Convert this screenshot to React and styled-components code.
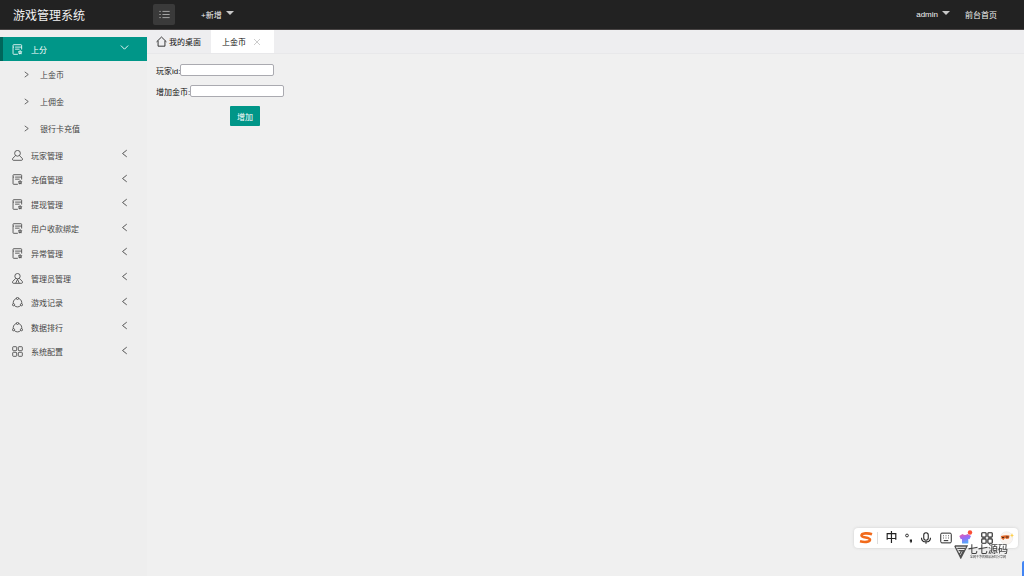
import React, { useState } from 'react';
import styled, { createGlobalStyle } from "styled-components"

const icons = {
    list: <><path d="M5 3.500h10.500M5 8h10.500M5 12.500h10.500"/><path d="M.5 3.500h2M.5 8h2M.5 12.500h2"/></>,
    form: <><path d="M8.500 15H2.500Q1.500 15 1.500 14V2Q1.500 1 2.500 1H13Q14 1 14 2V8M1.500 4.500H3M4.500 4.500H14M4.500 7.500H11"/><path d="M11.800 9.500l.8 1.600 1.800.3-1.300 1.300.3 1.800-1.600-.8-1.600.8.3-1.800-1.300-1.300 1.800-.3z" fill="currentColor" fillOpacity=".4"/></>,
    user: <><circle cx="8" cy="4.800" r="4.200"/><path d="M5.200 8.200L1 12.200Q.3 15 1.800 15H14.200Q15.700 15 15 12.200L10.800 8.200"/></>,
    admin: <><circle cx="8" cy="4.600" r="3.900"/><path d="M5.500 7.800L1 12.200Q.3 15 1.800 15H14.200Q15.700 15 15 12.200L10.500 7.800M8 9L5.500 14.800M8 9L10.500 14.800"/></>,
    record: <><circle cx="8" cy="8.200" r="6.200"/><g fill="#eee"><circle cx="8" cy="2" r="1.600"/><circle cx="2.200" cy="11.200" r="1.600"/><circle cx="13.800" cy="11.200" r="1.600"/></g></>,
    grid: <><rect x="1" y="1" width="5.800" height="5.800" rx="1"/><rect x="9.200" y="1" width="5.800" height="5.800" rx="1"/><rect x="1" y="9.200" width="5.800" height="5.800" rx="1"/><rect x="9.200" y="9.200" width="5.800" height="5.800" rx="1"/></>,
    home: <path d="M.8 8.500L8 1.500L15.200 8.500M3 7V14.800H13V7"/>,
    left: <path d="M12 2L4.500 8L12 14"/>,
    right: <path d="M4 2L12 8L4 14"/>,
    down: <path d="M1.500 4.500L8 11L14.500 4.500"/>,
    close: <path d="M2 2L14 14M14 2L2 14"/>,
    mic: <><rect x="5" y="1" width="6" height="10" rx="3"/><path d="M2 7.500C2 15 14 15 14 7.500M8 13V15.800"/></>,
    keyboard: <><rect x="1" y="1.500" width="14" height="13" rx="1.500"/><path d="M4 5h1M7.500 5h1M11 5h1M4 8h1M7.500 8h1M11 8h1M5 11.500h6"/></>,
};

const Icon = ({ name, size = 11, stroke = 1.2 }) => (
    <Svg viewBox="0 0 16 16" width={size} height={size} strokeWidth={stroke} aria-hidden="true">{icons[name]}</Svg>
)

const subMenu = ["上金币", "上佣金", "银行卡充值"];

const menu = [
    { icon: "user", label: "玩家管理" },
    { icon: "form", label: "充值管理" },
    { icon: "form", label: "提现管理" },
    { icon: "form", label: "用户收款绑定" },
    { icon: "form", label: "异常管理" },
    { icon: "admin", label: "管理员管理" },
    { icon: "record", label: "游戏记录" },
    { icon: "record", label: "数据排行" },
    { icon: "grid", label: "系统配置" },
];

const App = () => {
    const [playerId, setPlayerId] = useState("")
    const [coins, setCoins] = useState("")

    return (
        <Page>
            <GlobalStyle/>
            <Header>
                <Title href="#">游戏管理系统</Title>
                <Toggle type="button" aria-label="菜单"><Icon name="list"/></Toggle>
                <AddButton type="button">+新增<Caret/></AddButton>
                <Account>
                    <HeaderButton type="button">admin<Caret/></HeaderButton>
                    <a href="#">前台首页</a>
                </Account>
            </Header>
            <Body>
                <Sidebar>
                    <OpenItem href="#">
                        <Icon name="form"/>
                        <Label>上分</Label>
                        <Arrow><Icon name="down" size={9} stroke={1.6}/></Arrow>
                    </OpenItem>
                    {subMenu.map((label) => (
                        <SubItem href="#" key={label}><Icon name="right" size={7} stroke={1.8}/>{label}</SubItem>
                    ))}
                    <MenuList>
                        {menu.map(({ icon, label }) => (
                            <MenuItem href="#" key={label}>
                                <Icon name={icon}/>
                                <Label>{label}</Label>
                                <Arrow><Icon name="left" size={9} stroke={1.6}/></Arrow>
                            </MenuItem>
                        ))}
                    </MenuList>
                </Sidebar>
                <Main>
                    <Tabs>
                        <Tab type="button"><Icon name="home"/>我的桌面</Tab>
                        <Tab type="button" $active>上金币<Close><Icon name="close" size={8}/></Close></Tab>
                    </Tabs>
                    <Form onSubmit={(ev) => ev.preventDefault()}>
                        <Field>
                            <label htmlFor="player">玩家id:</label>
                            <Input id="player" type="text" value={playerId} onChange={(ev) => setPlayerId(ev.target.value)}/>
                        </Field>
                        <Field>
                            <label htmlFor="coins">增加金币:</label>
                            <Input id="coins" type="text" value={coins} onChange={(ev) => setCoins(ev.target.value)}/>
                        </Field>
                        <Submit type="submit">增加</Submit>
                    </Form>
                </Main>
            </Body>

            <ImeBar>
                <ImeLogo>
                    <svg width="14" height="12" viewBox="0 0 14 12" aria-hidden="true">
                        <path d="M13 2.200C9 .8 2.500 1 2.500 3.600C2.500 6 11 5.200 11 7.800C11 10.300 5 10.300 1 9.300" fill="none" stroke="#f26a1b" strokeWidth="2.600"/>
                    </svg>
                </ImeLogo>
                <Lang>中</Lang>
                <svg width="8" height="12" viewBox="0 0 8 12" aria-hidden="true">
                    <circle cx="2" cy="3.500" r="1.400" fill="none" stroke="#222" strokeWidth=".9"/>
                    <path d="M4.800 7.500h2.200v2q-.3 1.500-2 1.800q.8-.8.800-1.600h-1z" fill="#222"/>
                </svg>
                <Icon name="mic" size={12} stroke={1.4}/>
                <Icon name="keyboard" size={12} stroke={1.3}/>
                <svg width="14" height="16" viewBox="0 0 14 16" aria-hidden="true">
                    <defs>
                        <linearGradient id="shirt" x1="0" y1="0" x2=".4" y2="1">
                            <stop offset="0" stopColor="#f45c9c"/>
                            <stop offset=".5" stopColor="#9a6af5"/>
                            <stop offset="1" stopColor="#55a8fa"/>
                        </linearGradient>
                    </defs>
                    <path d="M3.500 4Q6 6 8.500 4L12 6L10.500 9.200L9.300 9V13Q9.300 13.500 8.800 13.500H3.500Q3 13.500 3 13V9L1.800 9.200L.3 6Z" fill="url(#shirt)"/>
                    <circle cx="11" cy="2.500" r="2.200" fill="#fa4d35"/>
                </svg>
                <Icon name="grid" size={12} stroke={1.5}/>
                <svg width="14" height="14" viewBox="0 0 14 14" aria-hidden="true">
                    <circle cx="6.500" cy="7" r="6.300" fill="#faf4ef" stroke="#e5e5e5" strokeWidth=".5"/>
                    <path d="M1 5Q5 4 9.500 4.500L9 7.500L6.500 8L5 7L3.500 9L1.500 7.800Z" fill="#dd6425"/>
                    <path d="M2 6h2v1H2zM6 5.500h2.500v1H6z" fill="#44291c"/>
                    <path d="M12 2l.6 1.800 1.400.6-1.400.6-.6 1.800-.6-1.800-1.400-.6 1.400-.6z" fill="#ffd14a"/>
                </svg>
            </ImeBar>
            <Watermark>
                <svg width="14" height="14" viewBox="0 0 14 14" fill="none" stroke="#505050" strokeWidth="1.300" aria-hidden="true">
                    <path d="M.8 1H13L6.800 13L.8 1M3.300 3.400H11M4.600 5.700H9.500L6.500 11.500M7.500 5.700L5.500 9.500"/>
                </svg>
                <WatermarkText>
                    <Brand>七七源码</Brand>
                    <Slogan>全网干净的精品源码分享网</Slogan>
                </WatermarkText>
            </Watermark>
            <Edge/>
        </Page>
    )
}

const GlobalStyle = createGlobalStyle`
    * {
        box-sizing: border-box;
    }
    body {
        margin: 0;
        background-color: #f0f0f0;
        color: #111;
        font-family: "Liberation Sans", "Noto Sans CJK SC", sans-serif;
        font-size: 8px;
    }
    a {
        color: inherit;
        text-decoration: none;
    }
    button, input {
        font: inherit;
        color: inherit;
    }
    button {
        border: none;
        padding: 0;
        background-color: transparent;
        cursor: pointer;
    }
`

const Svg = styled.svg`
    flex: none;
    display: block;
    fill: none;
    stroke: currentColor;
`

const Page = styled.div`
    min-height: 100vh;
    display: flex;
    flex-direction: column;
`

const Header = styled.header`
    height: 30px;
    display: flex;
    align-items: center;
    background-color: #222;
    border-bottom: 1px solid #484444;
    color: #f2f2f2;
`

const Title = styled.a`
    width: 153px;
    padding-left: 13px;
    font-size: 12px;
`

const Toggle = styled.button`
    width: 22px;
    height: 21px;
    display: grid;
    place-items: center;
    border-radius: 2px;
    background-color: #3a3a3a;
    color: #bbb;
`

const HeaderButton = styled.button`
    display: flex;
    align-items: center;
    gap: 4px;
`

const AddButton = styled(HeaderButton)`
    margin-left: 26px;
`

const Caret = styled.span`
    margin-bottom: 4px;
    border: 4px solid transparent;
    border-top-color: #c8c8c8;
    border-bottom: none;
`

const Account = styled.div`
    margin-left: auto;
    padding-right: 27px;
    display: flex;
    align-items: center;
    gap: 15px;
`

const Body = styled.div`
    flex: 1;
    display: flex;
`

const Sidebar = styled.nav`
    width: 147px;
    flex: none;
    padding-top: 7px;
    background-color: #eee;
    color: #444;
`

const MenuItem = styled.a`
    display: flex;
    align-items: center;
    gap: 8px;
    padding: 0 18px 0 12px;
`

const OpenItem = styled(MenuItem)`
    height: 24px;
    padding-left: 9px;
    border-left: 3px solid #00665b;
    background-color: #009688;
    color: #fff;
`

const Label = styled.span`
    flex: 1;
`

const Arrow = styled.span`
    padding-bottom: 3px;
`

const SubItem = styled.a`
    height: 27px;
    display: flex;
    align-items: center;
    gap: 10px;
    padding-left: 23px;
`

const MenuList = styled.div`
    height: 221px;
    margin-top: 1px;
    display: grid;
    grid-auto-rows: 1fr;
`

const Main = styled.main`
    flex: 1;
    min-width: 0;
`

const Tabs = styled.div`
    height: 24px;
    padding-left: 1px;
    display: flex;
    background-color: #eeeef0;
    border-bottom: 1px solid #e8e8ea;
`

const Tab = styled.button`
    height: 23px;
    display: flex;
    align-items: center;
    gap: 2px;
    padding: 0 10px 0 ${props => props.$active ? "11px" : "8px"};
    background-color: ${props => props.$active ? "#fff" : "transparent"};
`

const Close = styled.span`
    padding: 0 3px 0 5px;
    color: #aaa;
`

const Form = styled.form`
    display: flex;
    flex-direction: column;
    align-items: flex-start;
    gap: 9px;
    padding: 10px 9px;
`

const Field = styled.div`
    height: 12px;
    display: flex;
    align-items: center;
`

const Input = styled.input`
    width: 94px;
    height: 12px;
    padding: 1px;
    border: 1px solid #aaaab0;
    border-radius: 2px;
    background-color: #fff;
`

const Submit = styled.button`
    width: 30px;
    height: 20px;
    margin-left: 74px;
    border-radius: 1px;
    background-color: #009688;
    color: #fff;
`

const ImeBar = styled.aside`
    position: fixed;
    right: 6px;
    bottom: 28px;
    width: 164px;
    height: 20px;
    padding: 0 4px 0 5px;
    display: flex;
    align-items: center;
    justify-content: space-between;
    border-radius: 4px;
    background-color: #fff;
    box-shadow: 0 0 3px #ccc;
    color: #222;
`

const ImeLogo = styled.span`
    display: flex;
    padding-right: 4px;
    border-right: 1px solid #ddd;
`

const Lang = styled.span`
    font-size: 12px;
    line-height: 14px;
    font-weight: 500;
`

const Watermark = styled.div`
    position: fixed;
    right: 16px;
    bottom: 17px;
    display: flex;
    align-items: center;
    color: #444;
`

const WatermarkText = styled.div`
    display: flex;
    flex-direction: column;
    align-items: center;
`

const Brand = styled.span`
    font-size: 10px;
    line-height: 10px;
    font-weight: 500;
`

const Slogan = styled.span`
    font-size: 3px;
    line-height: 4px;
`

const Edge = styled.span`
    position: fixed;
    right: 0;
    bottom: 0;
    width: 2px;
    height: 15px;
    border-radius: 2px 0 0 0;
    background-color: #4285f4;
`

export default App;
